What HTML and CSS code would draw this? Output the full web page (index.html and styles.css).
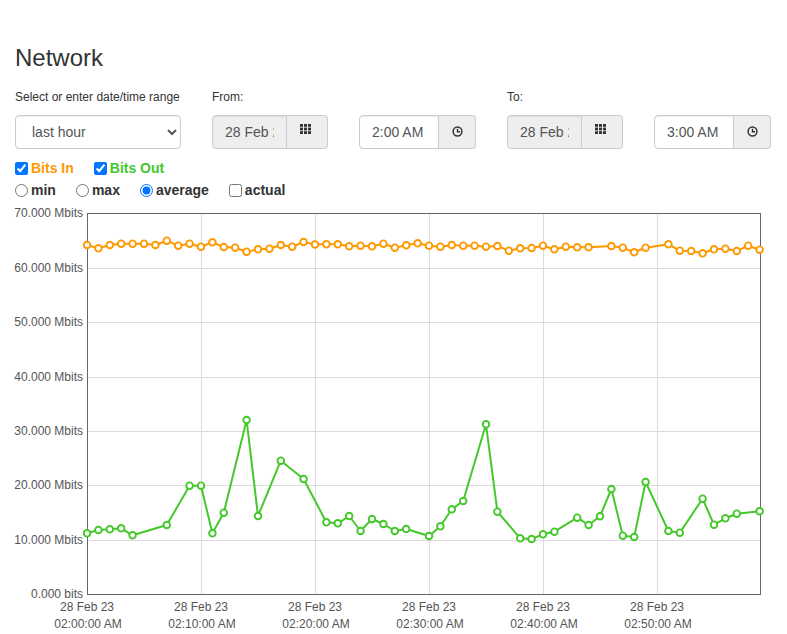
FILE: index.html
```html
<!DOCTYPE html>
<html lang="en">
<head>
<meta charset="utf-8">
<title>Network</title>
<link rel="stylesheet" href="styles.css">
</head>
<body>
<div class="page">
  <h1 class="title">Network</h1>
  <div class="range-row">
    <div class="col col-select">
      <label class="field-label">Select or enter date/time range</label>
      <select class="range-select">
        <option>last hour</option>
        <option>last day</option>
        <option>last week</option>
      </select>
    </div>
    <div class="col col-span">
      <label class="field-label">From:</label>
      <div class="pair">
        <div class="igroup">
          <input class="ctl ctl-date" type="text" readonly value="28 Feb 2023">
          <span class="addon addon-date">
            <svg class="ico-grid" width="11" height="10" viewBox="0 0 11 10"><g fill="#333"><rect x="0" y="0" width="3" height="2.8"/><rect x="4" y="0" width="3" height="2.8"/><rect x="8" y="0" width="3" height="2.8"/><rect x="0" y="3.6" width="3" height="2.8"/><rect x="4" y="3.6" width="3" height="2.8"/><rect x="8" y="3.6" width="3" height="2.8"/><rect x="0" y="7.2" width="3" height="2.8"/><rect x="4" y="7.2" width="3" height="2.8"/><rect x="8" y="7.2" width="3" height="2.8"/></g></svg>
          </span>
        </div>
        <div class="igroup">
          <input class="ctl ctl-time" type="text" value="2:00 AM">
          <span class="addon addon-time">
            <svg class="ico-clock" width="11" height="11" viewBox="0 0 11 11"><circle cx="5.5" cy="5.5" r="4.4" fill="none" stroke="#333" stroke-width="1.5"/><path d="M5.5 2.8V5.8H8" fill="none" stroke="#333" stroke-width="1.4"/></svg>
          </span>
        </div>
      </div>
    </div>
    <div class="col col-span">
      <label class="field-label">To:</label>
      <div class="pair">
        <div class="igroup">
          <input class="ctl ctl-date" type="text" readonly value="28 Feb 2023">
          <span class="addon addon-date">
            <svg class="ico-grid" width="11" height="10" viewBox="0 0 11 10"><g fill="#333"><rect x="0" y="0" width="3" height="2.8"/><rect x="4" y="0" width="3" height="2.8"/><rect x="8" y="0" width="3" height="2.8"/><rect x="0" y="3.6" width="3" height="2.8"/><rect x="4" y="3.6" width="3" height="2.8"/><rect x="8" y="3.6" width="3" height="2.8"/><rect x="0" y="7.2" width="3" height="2.8"/><rect x="4" y="7.2" width="3" height="2.8"/><rect x="8" y="7.2" width="3" height="2.8"/></g></svg>
          </span>
        </div>
        <div class="igroup">
          <input class="ctl ctl-time" type="text" value="3:00 AM">
          <span class="addon addon-time">
            <svg class="ico-clock" width="11" height="11" viewBox="0 0 11 11"><circle cx="5.5" cy="5.5" r="4.4" fill="none" stroke="#333" stroke-width="1.5"/><path d="M5.5 2.8V5.8H8" fill="none" stroke="#333" stroke-width="1.4"/></svg>
          </span>
        </div>
      </div>
    </div>
  </div>

  <div class="opt-row series-row">
    <label class="opt"><input type="checkbox" checked><span class="opt-text bits-in">Bits In</span></label>
    <label class="opt"><input type="checkbox" checked><span class="opt-text bits-out">Bits Out</span></label>
  </div>
  <div class="opt-row mode-row">
    <label class="opt"><input type="radio" name="mode"><span class="opt-text">min</span></label>
    <label class="opt"><input type="radio" name="mode"><span class="opt-text">max</span></label>
    <label class="opt"><input type="radio" name="mode" checked><span class="opt-text">average</span></label>
    <label class="opt"><input type="checkbox"><span class="opt-text">actual</span></label>
  </div>
</div>

<svg class="chart" width="787" height="434" viewBox="0 200 787 434">
  <defs>
    <marker id="mo" viewBox="-5 -5 10 10" refX="0" refY="0" markerWidth="10" markerHeight="10" markerUnits="userSpaceOnUse">
      <circle r="3.3" fill="#fff" stroke="#ff9900" stroke-width="1.9"/>
    </marker>
    <marker id="mg" viewBox="-5 -5 10 10" refX="0" refY="0" markerWidth="10" markerHeight="10" markerUnits="userSpaceOnUse">
      <circle r="3.3" fill="#fff" stroke="#44c82c" stroke-width="1.9"/>
    </marker>
  </defs>
  <g class="grid">
    <line x1="87" y1="268.5" x2="760" y2="268.5"/>
    <line x1="87" y1="322.5" x2="760" y2="322.5"/>
    <line x1="87" y1="377.5" x2="760" y2="377.5"/>
    <line x1="87" y1="431.5" x2="760" y2="431.5"/>
    <line x1="87" y1="485.5" x2="760" y2="485.5"/>
    <line x1="87" y1="540.5" x2="760" y2="540.5"/>
    <line x1="201.5" y1="213" x2="201.5" y2="594"/>
    <line x1="315.5" y1="213" x2="315.5" y2="594"/>
    <line x1="429.5" y1="213" x2="429.5" y2="594"/>
    <line x1="543.5" y1="213" x2="543.5" y2="594"/>
    <line x1="657.5" y1="213" x2="657.5" y2="594"/>
  </g>
  <rect class="frame" x="87.5" y="213.5" width="673" height="381"/>
  <line class="axis" x1="87.5" y1="213" x2="87.5" y2="595"/>
  <line class="axis" x1="87" y1="594.5" x2="761" y2="594.5"/>
  <g class="ylab">
    <text x="83" y="217">70.000 Mbits</text>
    <text x="83" y="272">60.000 Mbits</text>
    <text x="83" y="326">50.000 Mbits</text>
    <text x="83" y="381">40.000 Mbits</text>
    <text x="83" y="435">30.000 Mbits</text>
    <text x="83" y="489">20.000 Mbits</text>
    <text x="83" y="544">10.000 Mbits</text>
    <text x="83" y="598">0.000 bits</text>
  </g>
  <g class="xlab">
    <text x="87" y="611">28 Feb 23</text><text x="88" y="628">02:00:00 AM</text>
    <text x="201" y="611">28 Feb 23</text><text x="202" y="628">02:10:00 AM</text>
    <text x="315" y="611">28 Feb 23</text><text x="316" y="628">02:20:00 AM</text>
    <text x="429" y="611">28 Feb 23</text><text x="430" y="628">02:30:00 AM</text>
    <text x="543" y="611">28 Feb 23</text><text x="544" y="628">02:40:00 AM</text>
    <text x="657" y="611">28 Feb 23</text><text x="658" y="628">02:50:00 AM</text>
  </g>
  <polyline class="series s-in" points="87,245 98.4,248.3 109.8,245 121.2,243.7 132.6,243.7 144,243.7 155.4,245 166.8,240.7 178.2,245.7 189.6,243.7 201,246.7 212.4,242.3 223.8,247 235.2,247.7 246.6,251.7 258,249.3 269.4,248.7 280.8,245 292.2,246.7 303.6,242 315,244.5 326.4,244.3 337.8,244.3 349.2,246.3 360.6,245.7 372,246.3 383.4,243.7 394.8,247.7 406.2,245.3 417.6,243.3 429,245.7 440.4,246.7 451.8,245 463.2,245.7 474.6,245.7 486,246.7 497.4,246 508.8,250.7 520.2,248.3 531.6,248 543,245.7 554.4,249.3 565.8,246.7 577.2,247.3 588.6,247.3 611.4,246 622.8,247.7 634.2,252.3 645.6,247.7 668.4,244.3 679.8,250.7 691.2,251 702.6,253.3 714,249.3 725.4,248.7 736.8,251 748.2,245.7 759.6,249.7"/>
  <polyline class="series s-out" points="87,533.3 98.4,530 109.8,529.3 121.2,528.3 132.6,535.3 166.8,525 189.6,485.7 201,485.7 212.4,533.3 223.8,512.7 246.6,420 258,516 280.8,460.7 303.6,479 326.4,522.3 337.8,523.3 349.2,516 360.6,531 372,519 383.4,524 394.8,531 406.2,529 429,536 440.4,526.3 451.8,509.3 463.2,501 486,424.3 497.4,511.7 520.2,538.3 531.6,539 543,534.3 554.4,531.7 577.2,517.7 588.6,525 600,516.3 611.4,489 622.8,535.7 634.2,537 645.6,482 668.4,531 679.8,532.7 702.6,498.7 714,524.7 725.4,518.3 736.8,513.7 759.6,511.3"/>
</svg>
</body>
</html>
```

FILE: styles.css
```css
html, body {
  margin: 0;
  padding: 0;
  background: #fff;
}
body {
  width: 787px;
  font-family: "Liberation Sans", Arial, Helvetica, sans-serif;
  color: #333;
  font-size: 14px;
}
.page {
  padding: 0 15px;
}
.title {
  margin: 45px 0 0;
  font-size: 24px;
  font-weight: normal;
  line-height: 26px;
  color: #333;
}
.range-row {
  display: flex;
  gap: 31px;
  margin-top: 18px;
}
.col {
  display: flex;
  flex-direction: column;
}
.col-select {
  width: 166px;
}
.col-span {
  width: 264px;
}
.field-label {
  display: block;
  font-size: 12px;
  line-height: 17px;
  margin-bottom: 9px;
  color: #333;
}
.range-select {
  box-sizing: border-box;
  width: 166px;
  height: 34px;
  border: 1px solid #ccc;
  border-radius: 4px;
  background: #fff;
  color: #555;
  font-family: inherit;
  font-size: 14px;
  padding: 6px 8px 6px 12px;
  box-shadow: inset 0 1px 1px rgba(0,0,0,0.075);
}
.pair {
  display: flex;
  gap: 31px;
}
.igroup {
  display: flex;
  height: 34px;
}
.ctl {
  box-sizing: border-box;
  height: 34px;
  margin: 0;
  border: 1px solid #ccc;
  border-radius: 4px 0 0 4px;
  padding: 6px 12px;
  font-family: inherit;
  font-size: 14px;
  color: #555;
  background: #fff;
  box-shadow: inset 0 1px 1px rgba(0,0,0,0.075);
  outline: none;
}
.ctl-date {
  width: 75px;
  background: #eee;
}
.ctl-time {
  width: 80px;
}
.addon {
  box-sizing: border-box;
  height: 34px;
  border: 1px solid #ccc;
  border-left: 0;
  border-radius: 0 4px 4px 0;
  background: #eee;
  display: flex;
  align-items: center;
  justify-content: center;
}
.addon-date {
  width: 41px;
}
.addon-time {
  width: 37px;
}
.ico-grid {
  display: block;
  margin: -6px 3px 0 0;
}
.ico-clock {
  display: block;
  margin: -2px 0 0 1px;
}
.opt-row {
  display: flex;
  gap: 20px;
  height: 20px;
  align-items: center;
}
.series-row {
  margin-top: 9px;
}
.mode-row {
  margin-top: 2px;
}
.opt {
  display: flex;
  align-items: center;
  font-size: 14px;
  font-weight: bold;
  line-height: 20px;
  color: #333;
}
.opt input {
  width: 13px;
  height: 13px;
  margin: 0 3px 0 0;
}
.bits-in {
  color: #ff9900;
}
.bits-out {
  color: #44c82c;
}
.chart {
  display: block;
  font-family: "Liberation Sans", Arial, Helvetica, sans-serif;
}
.grid line {
  stroke: #dcdcdc;
  stroke-width: 1;
}
.frame {
  fill: none;
  stroke: #666;
  stroke-width: 1;
}
.axis {
  stroke: #666;
  stroke-width: 1;
}
.ylab text {
  font-size: 12px;
  fill: #555;
  text-anchor: end;
}
.xlab text {
  font-size: 12px;
  fill: #555;
  text-anchor: middle;
}
.series {
  fill: none;
  stroke-width: 2;
  stroke-linejoin: round;
}
.s-in {
  stroke: #ff9900;
  marker-start: url(#mo);
  marker-mid: url(#mo);
  marker-end: url(#mo);
}
.s-out {
  stroke: #44c82c;
  marker-start: url(#mg);
  marker-mid: url(#mg);
  marker-end: url(#mg);
}
```
